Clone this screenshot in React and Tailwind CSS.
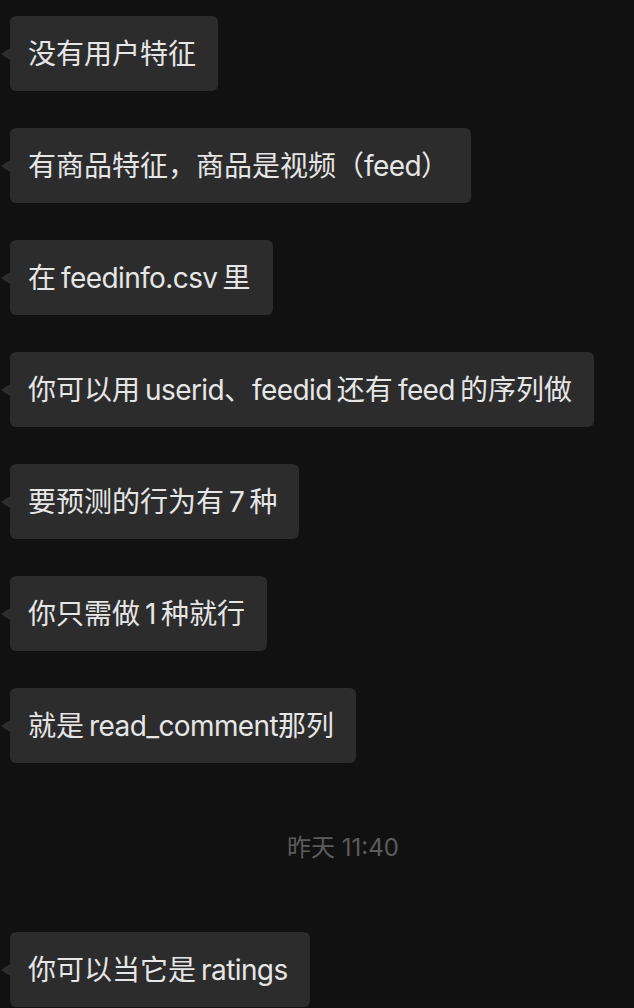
import React from "react";

const S = "\u2009";

const msgs = [
  "没有用户特征",
  "有商品特征，商品是视频（feed）",
  `在${S}feedinfo.csv${S}里`,
  `你可以用${S}userid、feedid${S}还有${S}feed${S}的序列做`,
  `要预测的行为有${S}7${S}种`,
  `你只需做${S}1${S}种就行`,
  `就是${S}read_comment那列`,
];

function Rich({ text }) {
  const parts = text.split(/([A-Za-z0-9_.]+)/);
  return parts.map((p, i) =>
    /^[A-Za-z0-9_.]+$/.test(p) ? (
      <span key={i} className="tracking-[-0.6px]">
        {p}
      </span>
    ) : (
      <span key={i}>{p}</span>
    )
  );
}

function Bubble({ text }) {
  return (
    <div className="relative flex pl-[10px]">
      <div className="absolute left-[1px] top-1/2 -translate-y-1/2 w-0 h-0 border-y-[6px] border-y-transparent border-r-[9px] border-r-[#2c2c2c]" />
      <div className="h-[75px] flex items-center rounded-[6px] bg-[#2c2c2c] pl-[18px] pr-[22px] text-[28px] text-[#e6e6e6] whitespace-nowrap">
        <Rich text={text} />
      </div>
    </div>
  );
}

export default function App() {
  return (
    <div
      className="w-[634px] h-[1008px] overflow-hidden bg-[#111111] pt-[16px]"
      style={{ fontFamily: '"Inter", "Noto Sans CJK SC", sans-serif' }}
    >
      <div className="flex flex-col gap-[37px]">
        {msgs.map((m, i) => (
          <Bubble key={i} text={m} />
        ))}
      </div>
      <div className="h-[169px] flex items-center justify-center pl-[52px] text-[24px] text-[#5c5c5c]">
        昨天 11:40
      </div>
      <Bubble text={`你可以当它是${S}ratings`} />
    </div>
  );
}
